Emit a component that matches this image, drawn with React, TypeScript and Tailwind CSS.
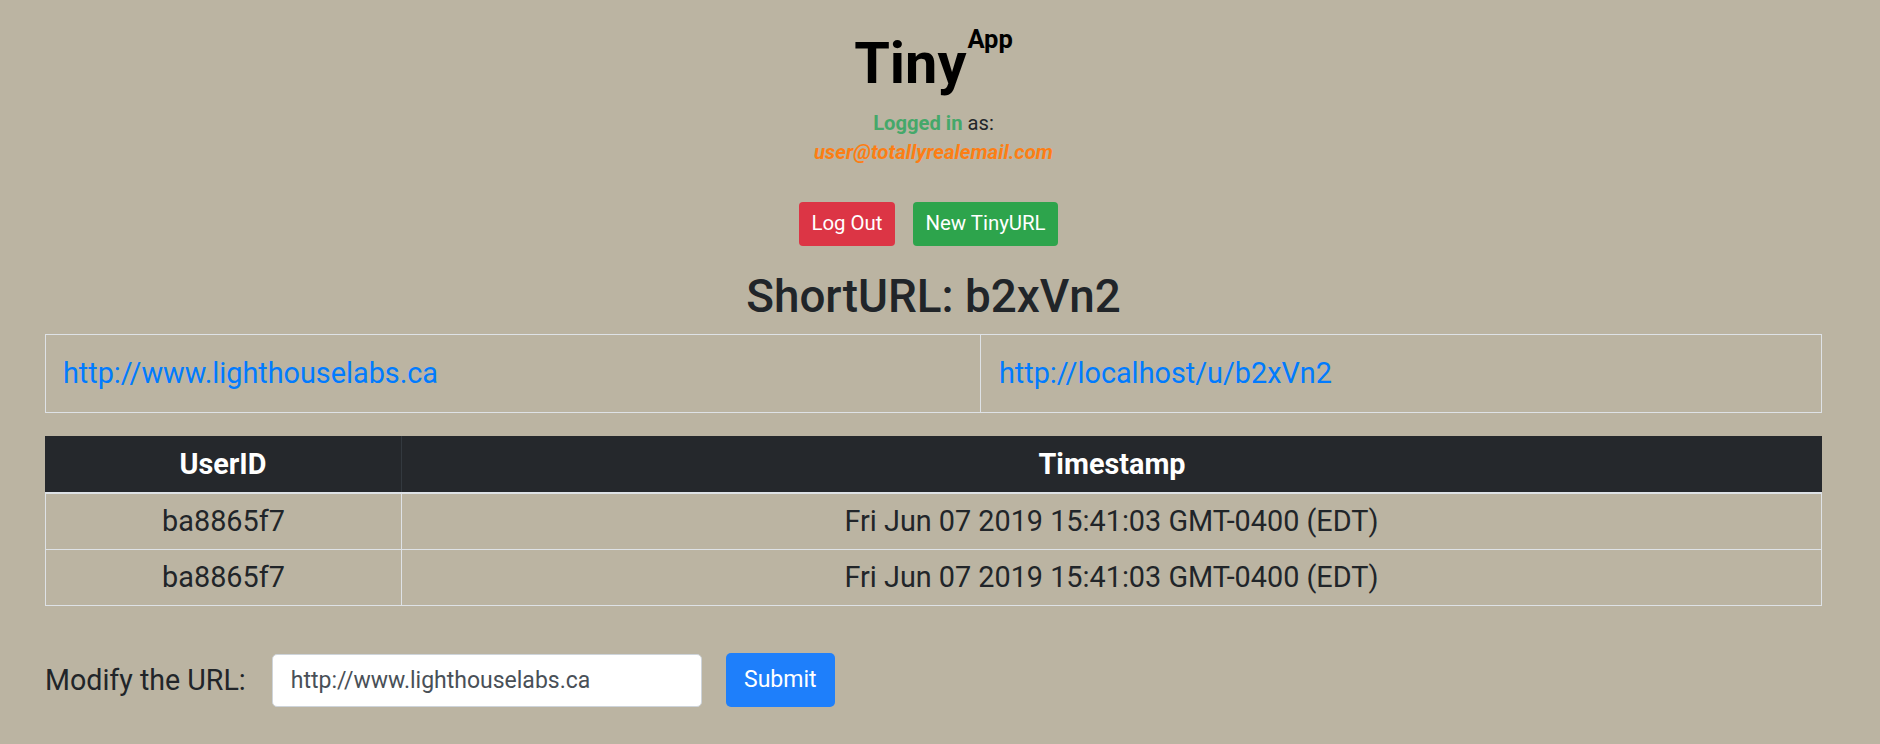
import React from "react";

export default function App() {
  return (
    <div
      className="min-h-screen w-full bg-[#bbb4a2] text-[#212529]"
      style={{ fontFamily: 'Roboto, "Liberation Sans", Arial, sans-serif' }}
    >
      <div className="w-[1867px] px-[45px] pt-[29px]">
        {/* Title */}
        <div className="flex flex-col items-center">
          <div className="flex items-start">
            <h1 className="text-[57.6px] font-bold leading-[69px] text-black">Tiny</h1>
            <span className="ml-[1px] -mt-[2px] text-[25.5px] font-bold leading-[25px] text-black">App</span>
          </div>
          <div className="mt-[11px] text-[20.2px] leading-[28.8px]">
            <span className="font-bold text-[#45a86a]">Logged in</span> as:
          </div>
          <div className="text-[20.4px] font-bold italic leading-[28.8px] text-[#fd7e14]">
            user@totallyrealemail.com
          </div>
          <div className="mt-[35px] flex gap-[18px] pr-[10px]">
            <button className="h-[44px] w-[96px] rounded-[4px] bg-[#dc3545] text-[20.4px] text-white">
              Log Out
            </button>
            <button className="h-[44px] w-[145px] rounded-[4px] bg-[#2da44c] text-[20.4px] text-white">
              New TinyURL
            </button>
          </div>
          <h2 className="mt-[22px] text-[45.8px] font-medium leading-[57.6px]">ShortURL: b2xVn2</h2>
        </div>

        {/* Link table */}
        <div className="mt-[9px] grid h-[79px] grid-cols-[935px_1fr] border border-[#dee2e6] text-[28.8px] text-[#007bff]">
          <div className="flex items-center border-r border-[#dee2e6] pl-[17px]">
            <a>http://www.lighthouselabs.ca</a>
          </div>
          <div className="flex items-center pl-[18px]">
            <a>http://localhost/u/b2xVn2</a>
          </div>
        </div>

        {/* Visits table */}
        <div className="mt-[23px] text-[28.8px]">
          <div className="grid h-[58px] grid-cols-[357px_1fr] border-b-2 border-[#dee2e6] bg-[#25282c] font-bold text-white">
            <div className="flex items-center justify-center border-r border-[#33393f]">UserID</div>
            <div className="flex items-center justify-center">Timestamp</div>
          </div>
          {[0, 1].map((i) => (
            <div
              key={i}
              className="grid h-[56px] grid-cols-[356px_1fr] border-x border-b border-[#dee2e6]"
            >
              <div className="flex items-center justify-center border-r border-[#dee2e6]">ba8865f7</div>
              <div className="flex items-center justify-center">
                Fri Jun 07 2019 15:41:03 GMT-0400 (EDT)
              </div>
            </div>
          ))}
        </div>

        {/* Form */}
        <div className="mt-[47px] flex items-center">
          <label className="text-[28.6px] leading-[34px]">Modify the URL:</label>
          <input
            className="ml-[26px] h-[53px] w-[430px] rounded-[5px] border border-[#ced4da] bg-white px-[18px] text-[23px] text-[#495057] outline-none"
            defaultValue="http://www.lighthouselabs.ca"
          />
          <button className="ml-[24px] h-[54px] w-[109px] rounded-[5px] bg-[#1e7ffb] text-[23px] text-white">
            Submit
          </button>
        </div>
      </div>
    </div>
  );
}
